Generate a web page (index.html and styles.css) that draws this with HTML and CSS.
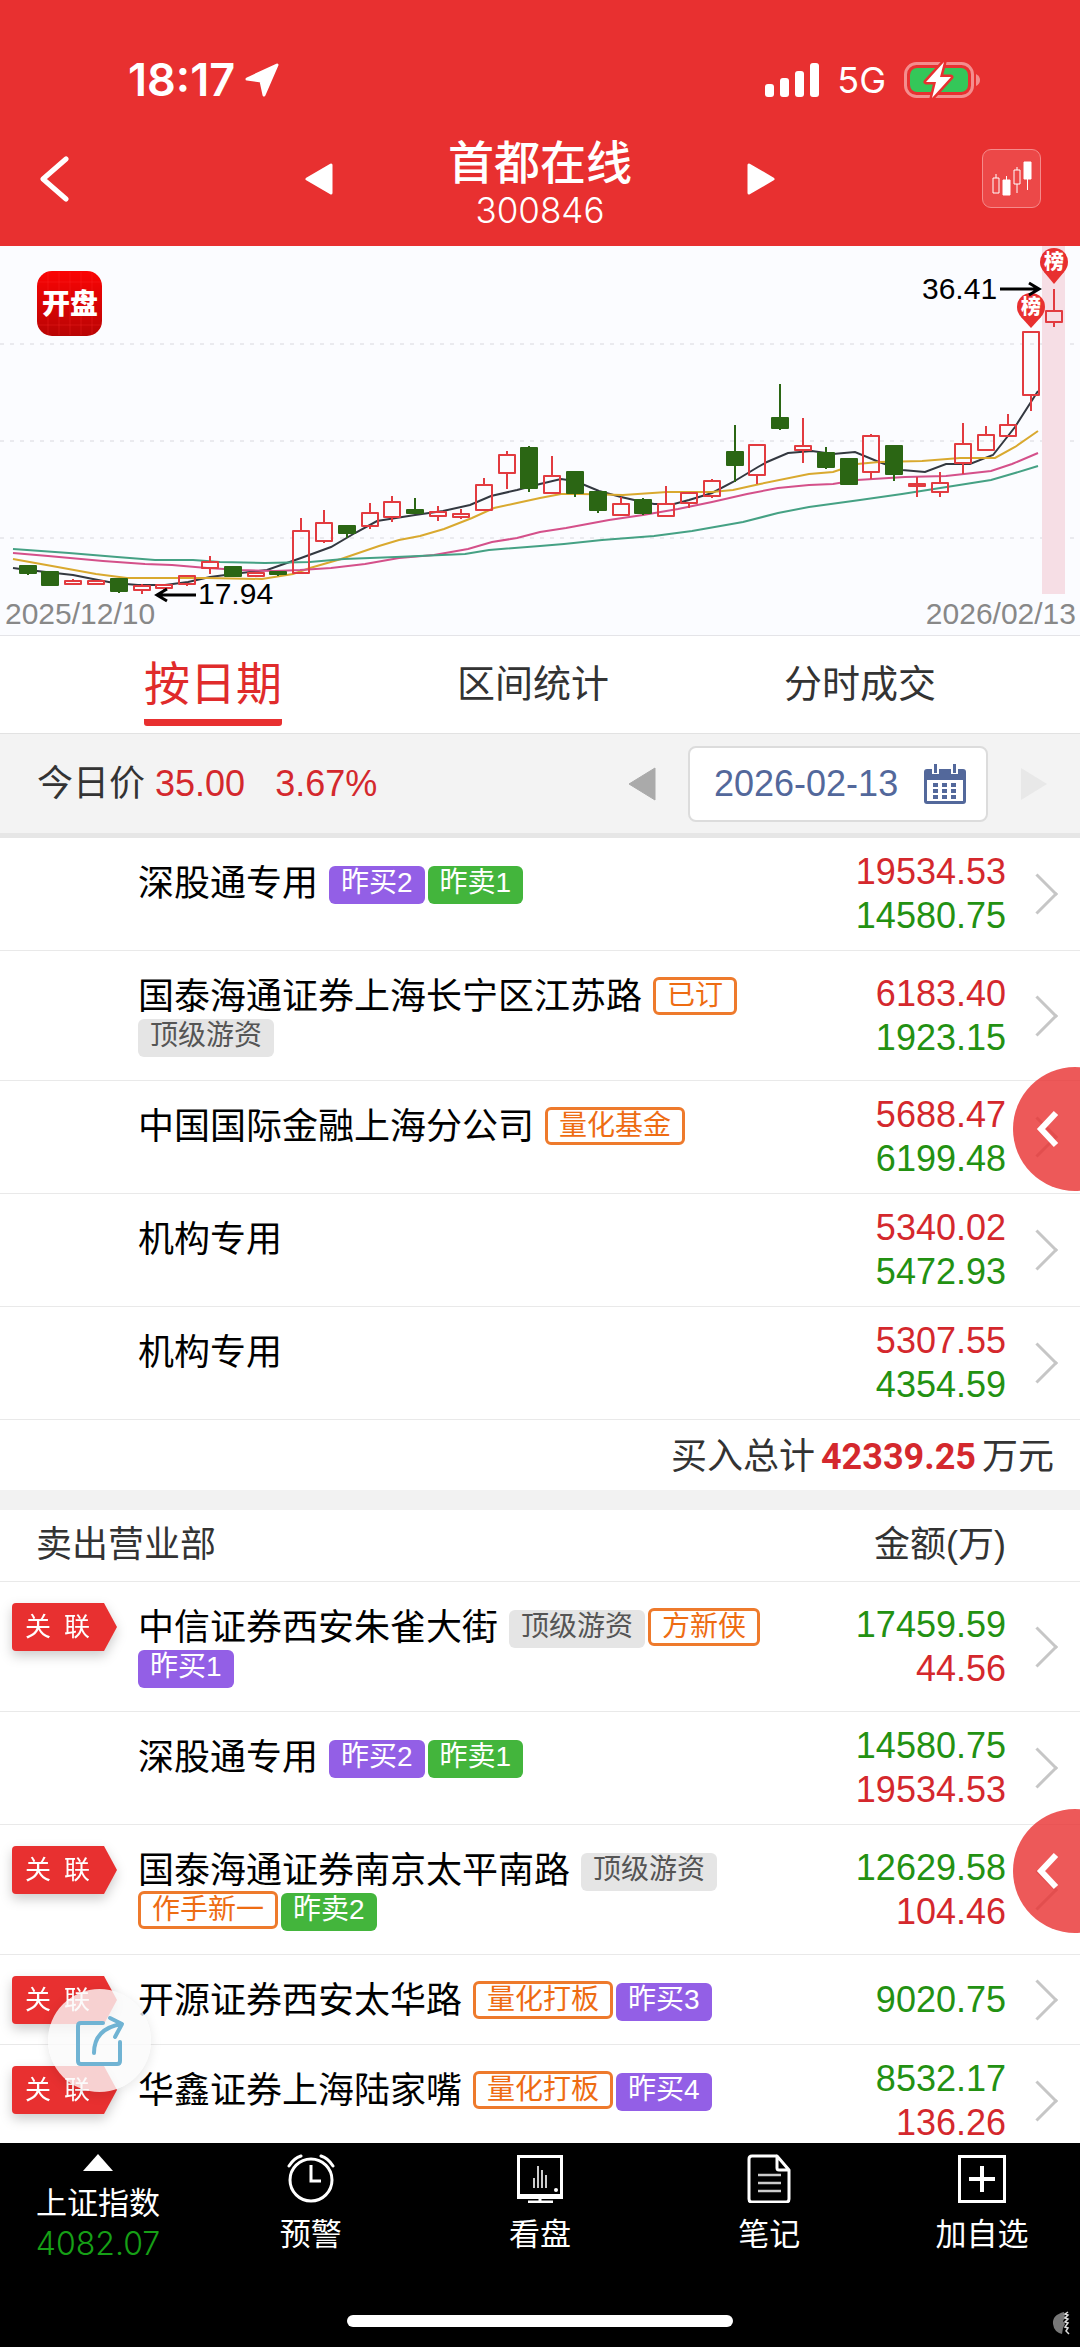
FILE: index.html
```html
<!DOCTYPE html>
<html lang="zh-CN">
<head>
<meta charset="utf-8">
<meta name="viewport" content="width=device-width, initial-scale=1">
<title>首都在线 300846</title>
<link rel="stylesheet" href="styles.css">
</head>
<body>
<header class="top">
  <div class="status">
    <div class="status-side">
      <span class="clock">18:17</span>
      <svg width="34" height="34" viewBox="0 0 34 34"><path d="M32 2 19 32l-3-14L2 16z" fill="#fff" stroke="#fff" stroke-width="3" stroke-linejoin="round"/></svg>
    </div>
    <div class="status-side status-right">
      <svg width="54" height="34" viewBox="0 0 54 34" fill="#fff"><rect y="21" width="9" height="13" rx="3"/><rect x="15" y="15" width="9" height="19" rx="3"/><rect x="30" y="8" width="9" height="26" rx="3"/><rect x="45" width="9" height="34" rx="3"/></svg>
      <span class="net">5G</span>
      <svg width="76" height="38" viewBox="0 0 76 38"><rect x="1.5" y="2.500" width="67" height="33" rx="11" fill="none" stroke="#f48d8d" stroke-width="3"/><path d="M72 13q4 2 4 6t-4 6z" fill="#f48d8d"/><rect x="6" y="7" width="58" height="24" rx="7" fill="#34c759"/><path d="M40 1 22 21h10l-4 16 19-21H36z" fill="#fff" stroke="#e83030" stroke-width="5" stroke-linejoin="round"/><path d="M40 1 22 21h10l-4 16 19-21H36z" fill="#fff"/></svg>
    </div>
  </div>
  <div class="titlebar">
    <button class="icon-btn" aria-label="返回"><svg width="30" height="46" viewBox="0 0 30 46"><path d="M27 3 4 23l23 20" fill="none" stroke="#fff" stroke-width="5" stroke-linecap="round" stroke-linejoin="round"/></svg></button>
    <div class="stock">
      <button class="icon-btn" aria-label="上一只"><svg width="28" height="32" viewBox="0 0 28 32"><path d="M26 2v28L2 16z" fill="#fff" stroke="#fff" stroke-width="3" stroke-linejoin="round"/></svg></button>
      <div class="stock-name"><h1>首都在线</h1><p>300846</p></div>
      <button class="icon-btn" aria-label="下一只"><svg width="28" height="32" viewBox="0 0 28 32"><path d="M2 2v28l24-14z" fill="#fff" stroke="#fff" stroke-width="3" stroke-linejoin="round"/></svg></button>
    </div>
    <button class="kline-btn" aria-label="K线"><svg width="40" height="36" viewBox="0 0 40 36" fill="none" stroke="#fff"><path d="M1 17h6v15H1zM4 13v4" /><path d="M11 19h7v15h-7z" fill="#fff"/><path d="M14.500 15v4"/><path d="M22 9h6v14h-6zM25 6v3m0 14v9"/><path d="M32 1h7v17h-7z" fill="#fff"/><path d="M35.500 18v11"/></svg></button>
  </div>
</header>

<main class="content">
  <svg class="chart" viewBox="0 0 1080 389" role="img" aria-label="日K线">
    <defs>
      <linearGradient id="logo" x2="0" y2="1"><stop offset="0" stop-color="#fb0404"/><stop offset="1" stop-color="#b80404"/></linearGradient>
    </defs>
    <path class="grid" d="M0 98H1080M0 195H1080M0 292H1080"/>
    <rect x="1042" width="23" height="348" fill="#f6dee5"/>
    <rect x="37" y="25" width="65" height="65" rx="15" fill="url(#logo)"/>
    <path d="M48 26v63M59 26v63M70 26v63M81 26v63M92 26v63M38 36h63M38 79h63" stroke="#f33" stroke-opacity=".3"/>
    <text class="logo-text" x="70" y="68">开盘</text>
    <g class="averages">
      <polyline stroke="#333840" points="13,322 28,324 73,329 93,333 114,337 138,339 165,339 188,336 210,331 241,327 267,324 301,312 331,301 355,287 377,275 415,269 443,265 470,259 491,250 517,244 540,238 561,233 575,235 599,245 621,251 643,256 654,258 674,258 689,254 712,247 733,236 758,221 767,216 788,207 812,205 833,208 855,206 879,216 902,224 925,226 946,218 970,218 993,209 1015,181 1038,145"/>
      <polyline stroke="#d9a92f" points="13,313 52,320 96,328 127,332 165,332 207,332 262,333 293,328 310,322 341,313 379,300 399,294 420,290 444,283 472,272 494,262 517,257 540,252 561,248 581,248 623,249 667,246 712,246 733,244 760,238 809,228 833,226 857,218 879,216 922,215 960,212 995,212 1015,201 1038,185"/>
      <polyline stroke="#d4508a" points="13,307 48,310 103,315 145,318 172,319 207,322 241,324 275,325 300,324 331,322 365,318 399,312 434,309 468,303 492,296 517,292 540,286 566,282 609,274 643,269 678,263 712,256 747,248 778,242 809,239 833,238 857,234 905,231 946,230 991,225 1012,218 1038,207"/>
      <polyline stroke="#45a184" points="13,303 69,307 117,311 155,314 193,314 220,316 265,317 310,316 344,313 396,311 465,308 489,304 540,300 564,298 602,294 654,290 692,285 743,276 778,267 809,261 860,254 902,248 953,240 991,234 1015,227 1038,220"/>
    </g>
    <g id="candles"></g>
    <g fill="#e83030"><path d="M1044 26h20l-10 12z"/><circle cx="1054" cy="16" r="14"/><path d="M1021 71h20l-10 11z"/><circle cx="1031" cy="61" r="14"/></g>
    <text class="pin" x="1054" y="23">榜</text>
    <text class="pin" x="1031" y="68">榜</text>
    <path class="arrow" d="M1000 43h38m-9-6 10 6-10 6M196 349h-38m9-6-10 6 10 6"/>
    <text class="mark" x="922" y="53">36.41</text>
    <text class="mark" x="198" y="358">17.94</text>
    <text class="day" x="5" y="378">2025/12/10</text>
    <text class="day day-end" x="1076" y="378">2026/02/13</text>
  </svg>

  <nav class="tabs">
    <a class="tab active" href="#date">按日期</a>
    <a class="tab" href="#range">区间统计</a>
    <a class="tab" href="#tick">分时成交</a>
  </nav>

  <div class="pricebar">
    <p class="price">今日价 <span class="up">35.00</span> <span class="up change">3.67%</span></p>
    <div class="picker">
      <button class="icon-btn" aria-label="前一天"><svg width="28" height="34" viewBox="0 0 28 34"><path d="M27 1v32L1 17z" fill="#aaa" stroke="#aaa" stroke-linejoin="round"/></svg></button>
      <label class="date">
        <input type="text" value="2026-02-13" aria-label="日期" readonly>
        <svg width="42" height="40" viewBox="0 0 42 40"><path d="M3 5h36q3 0 3 3v29q0 3-3 3H3q-3 0-3-3V8q0-3 3-3z" fill="#53689b"/><path d="M3 16h36v21H3z" fill="#fff"/><path d="M8 0h7v10H8zM27 0h7v10h-7z" fill="#fff"/><path d="M10 0h3v9h-3zM29 0h3v9h-3zM9 19h5v4H9zm9 0h5v4h-5zm9 0h5v4h-5zM9 25h5v4H9zm9 0h5v4h-5zm9 0h5v4h-5zM9 31h5v4H9zm9 0h5v4h-5zm9 0h5v4h-5z" fill="#53689b"/></svg>
      </label>
      <button class="icon-btn" aria-label="后一天" disabled><svg width="28" height="34" viewBox="0 0 28 34"><path d="M1 1v32l26-16z" fill="#e8e8e8"/></svg></button>
    </div>
  </div>

  <section class="group">
    <ul class="seats">
      <li class="seat"><div class="who"><span class="name">深股通专用</span><span class="tag buy">昨买2</span><span class="tag sell">昨卖1</span></div><div class="sums"><span class="up">19534.53</span><span class="down">14580.75</span></div></li>
      <li class="seat"><div class="who"><span class="name">国泰海通证券上海长宁区江苏路</span><span class="tag line">已订</span><span class="tag grey">顶级游资</span></div><div class="sums"><span class="up">6183.40</span><span class="down">1923.15</span></div></li>
      <li class="seat"><div class="who"><span class="name">中国国际金融上海分公司</span><span class="tag line">量化基金</span></div><div class="sums"><span class="up">5688.47</span><span class="down">6199.48</span></div></li>
      <li class="seat"><div class="who"><span class="name">机构专用</span></div><div class="sums"><span class="up">5340.02</span><span class="down">5472.93</span></div></li>
      <li class="seat"><div class="who"><span class="name">机构专用</span></div><div class="sums"><span class="up">5307.55</span><span class="down">4354.59</span></div></li>
    </ul>
    <p class="total">买入总计<strong>42339.25</strong>万元</p>
    <button class="drawer drawer-buy" aria-label="展开"><svg width="24" height="38" viewBox="0 0 24 38"><path d="M20 3 5 19l15 16" fill="none" stroke="#fff" stroke-width="6"/></svg></button>
  </section>

  <section class="group group-sell">
    <div class="group-head"><h2>卖出营业部</h2><span>金额(万)</span></div>
    <ul class="seats">
      <li class="seat"><span class="linked">关&ensp;联</span><div class="who"><span class="name">中信证券西安朱雀大街</span><span class="tag grey">顶级游资</span><span class="tag line">方新侠</span><span class="tag buy">昨买1</span></div><div class="sums"><span class="down">17459.59</span><span class="up">44.56</span></div></li>
      <li class="seat"><div class="who"><span class="name">深股通专用</span><span class="tag buy">昨买2</span><span class="tag sell">昨卖1</span></div><div class="sums"><span class="down">14580.75</span><span class="up">19534.53</span></div></li>
      <li class="seat"><span class="linked">关&ensp;联</span><div class="who"><span class="name">国泰海通证券南京太平南路</span><span class="tag grey">顶级游资</span><span class="tag line">作手新一</span><span class="tag sell">昨卖2</span></div><div class="sums"><span class="down">12629.58</span><span class="up">104.46</span></div></li>
      <li class="seat"><span class="linked">关&ensp;联</span><div class="who"><span class="name">开源证券西安太华路</span><span class="tag line">量化打板</span><span class="tag buy">昨买3</span></div><div class="sums"><span class="down">9020.75</span></div></li>
      <li class="seat"><span class="linked">关&ensp;联</span><div class="who"><span class="name">华鑫证券上海陆家嘴</span><span class="tag line">量化打板</span><span class="tag buy">昨买4</span></div><div class="sums"><span class="down">8532.17</span><span class="up">136.26</span></div></li>
    </ul>
    <button class="drawer drawer-sell" aria-label="展开"><svg width="24" height="38" viewBox="0 0 24 38"><path d="M20 3 5 19l15 16" fill="none" stroke="#fff" stroke-width="6"/></svg></button>
  </section>
</main>

<button class="share" aria-label="分享"><svg width="50" height="52" viewBox="0 0 50 52" fill="none" stroke="#70b3d3" stroke-width="4" stroke-linecap="round" stroke-linejoin="round"><path d="M28 8H6q-3 0-3 3v35q0 3 3 3h36q3 0 3-3V27"/><path d="M19 38Q19 14 46 9M35 3l12 6-7 13"/></svg></button>

<footer class="bottom">
  <nav class="menu">
    <a class="menu-item" href="#index"><svg width="32" height="19" viewBox="0 0 32 19"><path d="M16 1 31 18H1z" fill="#fff"/></svg><span>上证指数</span><span class="index">4082.07</span></a>
    <a class="menu-item" href="#alert"><svg width="48" height="50" viewBox="0 0 48 50" fill="none" stroke="#fff" stroke-width="3" stroke-linecap="round"><circle cx="24" cy="27" r="21"/><path d="M24 12v16h10" stroke-linecap="butt"/><path d="M2 13Q7 5 14 3M46 13Q41 5 34 3"/></svg><span>预警</span></a>
    <a class="menu-item" href="#watch"><svg width="48" height="50" viewBox="0 0 48 50" fill="none" stroke="#fff" stroke-width="3"><path d="M2.500 3.500h43v41h-43z"/><path d="M1 43h46" stroke-width="4"/><path d="M24 45v4M12 49h25"/><path d="M18 25v10M22 13v22M26 17v18M30 22v13" stroke-width="2" stroke="#ccc"/><circle cx="40" cy="37" r="2" fill="#fff" stroke="none"/></svg><span>看盘</span></a>
    <a class="menu-item" href="#notes"><svg width="48" height="50" viewBox="0 0 48 50" fill="none" stroke="#fff" stroke-width="3" stroke-linejoin="round"><path d="M32 3H7q-3 0-3 3v40q0 3 3 3h34q3 0 3-3V17L32 3v12q0 2 2 2h10"/><path d="M13 22h23M13 30h23M13 38h23" stroke="#ccc" stroke-width="2.500"/></svg><span>笔记</span></a>
    <a class="menu-item" href="#add"><svg width="48" height="50" viewBox="0 0 48 50" fill="none" stroke="#fff"><path d="M1.500 3.500h45v45h-45z" stroke-width="3"/><path d="M24 13v26M11 26h26" stroke-width="4"/></svg><span>加自选</span></a>
  </nav>
  <div class="home"></div>
  <svg class="smudge" width="18" height="24" viewBox="0 0 18 24"><path d="M12 1Q0 4 1 13q1 8 9 10l1-6 2-4-2-3 2-3z" fill="#777"/><path d="M16 1l-3 2 3 1-3 3 3 1-3 3 3 1-3 4 3 1-2 3 3 3" fill="none" stroke="#ddd" stroke-width="1.500"/></svg>
</footer>
<script src="chart.js"></script>
</body>
</html>
```
FILE: styles.css
```css
* {
  box-sizing: border-box;
}

body {
  margin: 0;
  height: 100vh;
  display: flex;
  flex-direction: column;
  overflow: hidden;
  background: #fff;
  color: #000;
  font-family: "Liberation Sans", "Noto Sans CJK SC", sans-serif;
  font-size: 36px;
  line-height: 40px;
}

h1, h2, p, ul {
  margin: 0;
  padding: 0;
  font-weight: 400;
}

ul {
  list-style: none;
}

a {
  color: inherit;
  text-decoration: none;
}

svg {
  display: block;
}

button {
  padding: 0;
  border: 0;
  background: none;
  font: inherit;
}

.up {
  color: #d4282d;
}

.down {
  color: #239112;
}

/* header */
.top {
  flex: none;
  padding-bottom: 17px;
  background: #e83030;
  color: #fff;
}

.status {
  display: flex;
  justify-content: space-between;
  padding: 56px 100px 24px 128px;
  line-height: 48px;
  font-family: Inter, sans-serif;
}

.status-side {
  display: flex;
  align-items: center;
  gap: 10px;
}

.status-right {
  gap: 18px;
}

.clock {
  font-size: 45px;
  font-weight: 600;
}

.net {
  font-size: 36px;
}

.titlebar {
  display: grid;
  grid-template-columns: 1fr 470px 1fr;
  align-items: center;
  height: 101px;
  padding: 0 39px;
}

.stock {
  display: flex;
  justify-content: space-between;
  align-items: center;
}

.stock-name {
  padding-top: 7px;
  text-align: center;
}

.stock-name h1 {
  font-size: 46px;
  font-weight: 500;
  line-height: 56px;
}

.stock-name p {
  font-family: Inter, sans-serif;
  font-size: 35px;
  font-weight: 300;
  line-height: 38px;
}

.icon-btn {
  justify-self: start;
}

.kline-btn {
  justify-self: end;
  display: grid;
  place-items: center;
  width: 59px;
  height: 59px;
  border: 1px solid #f58a8a;
  border-radius: 9px;
  background: #ec4848;
}

/* main column */
.content {
  flex: 1;
  min-height: 0;
  overflow-x: hidden;
  overflow-y: auto;
  scrollbar-width: none;
}

.chart {
  width: 100%;
  border-bottom: 1px solid #e4e4e8;
  background: #fbfcff;
}

.grid {
  stroke: #d8d8de;
  stroke-dasharray: 4 6;
}

.averages {
  fill: none;
  stroke-width: 2;
}

.logo-text,
.pin {
  fill: #fff;
  font-weight: 900;
  text-anchor: middle;
}

.logo-text {
  font-size: 28px;
}

.pin {
  font-size: 20px;
}

.arrow {
  fill: none;
  stroke: #000;
  stroke-width: 3;
}

.mark,
.day {
  font-size: 30px;
}

.day {
  fill: #888;
}

.day-end {
  text-anchor: end;
}

.tabs {
  display: flex;
  justify-content: space-between;
  padding: 0 144px 7px;
  border-bottom: 1px solid #e2e2e2;
  color: #333;
  font-size: 38px;
  line-height: 96px;
}

.tab {
  height: 90px;
}

.tab.active {
  border-bottom: 7px solid #e83030;
  border-radius: 3px;
  color: #e02b2b;
  font-size: 46px;
}

.pricebar {
  display: flex;
  justify-content: space-between;
  align-items: center;
  padding: 12px 32px 11px 37px;
  border-bottom: 5px solid #e6e6e6;
  background: #f3f3f3;
  color: #333;
}

.change {
  margin-left: 20px;
}

.picker {
  display: flex;
  align-items: center;
  gap: 32px;
}

.date {
  display: flex;
  justify-content: space-between;
  align-items: center;
  width: 300px;
  height: 76px;
  padding: 0 20px 0 24px;
  border: 2px solid #dcdcdc;
  border-radius: 8px;
  background: #fff;
}

.date input {
  width: 190px;
  padding: 0;
  border: 0;
  outline: 0;
  background: none;
  color: #53689b;
  font: inherit;
}

/* broker seats */
.group {
  position: relative;
}

.seat {
  position: relative;
  display: flex;
  align-items: center;
  padding-right: 74px;
  border-bottom: 1px solid #e9e9e9;
}

.seat::after {
  content: "";
  position: absolute;
  right: 28px;
  top: 50%;
  width: 26px;
  height: 26px;
  border: solid #c6c6c6;
  border-width: 3px 3px 0 0;
  transform: translateY(-50%) rotate(45deg);
}

.who {
  flex: 1;
  align-self: flex-start;
  display: flex;
  flex-wrap: wrap;
  align-items: flex-start;
  column-gap: 3px;
  padding: 26px 0 23px 138px;
}

.linked + .who {
  padding-left: 21px;
}

.name {
  margin-right: 8px;
}

.tag {
  margin-top: 2px;
  padding: 0 12px 4px;
  border-radius: 6px;
  color: #fff;
  font-size: 28px;
  line-height: 34px;
}

.buy {
  background: #935fe6;
}

.sell {
  background: #43b53c;
}

.grey {
  background: #e5e5e5;
  color: #555;
}

.line {
  margin-top: 0;
  padding: 0 11px;
  border: 3px solid #ee7a2c;
  color: #ee6c12;
  line-height: 32px;
}

.sums {
  display: flex;
  flex-direction: column;
  width: 160px;
  padding: 12px 0;
  line-height: 44px;
  text-align: right;
}

.linked {
  align-self: flex-start;
  position: relative;
  width: 92px;
  margin: 21px 13px 0 12px;
  padding-left: 13px;
  border-radius: 4px 0 0 4px;
  background: #e83030;
  color: #fff;
  font-size: 26px;
  line-height: 48px;
  white-space: nowrap;
  filter: drop-shadow(0 5px 6px rgba(0, 0, 0, 0.2));
}

.linked::after {
  content: "";
  position: absolute;
  left: 100%;
  top: 0;
  border: solid transparent;
  border-width: 24px 0 24px 13px;
  border-left-color: #e83030;
}

.total {
  padding: 17px 26px 13px;
  color: #333;
  text-align: right;
}

.total strong {
  margin: 0 6px;
  color: #d4282d;
  font-family: Roboto, sans-serif;
}

.group-sell {
  border-top: 20px solid #f2f2f2;
}

.group-head {
  display: flex;
  justify-content: space-between;
  padding: 15px 74px 16px 36px;
  border-bottom: 1px solid #e9e9e9;
  color: #333;
}

.group-head h2 {
  font-size: 36px;
}

.drawer {
  position: absolute;
  right: -57px;
  width: 124px;
  height: 124px;
  padding-left: 23px;
  border-radius: 50%;
  background: rgba(232, 48, 48, 0.8);
}

.drawer-buy {
  top: 229px;
}

.drawer-sell {
  top: 299px;
}

.share {
  position: fixed;
  left: 48px;
  bottom: 255px;
  display: grid;
  place-items: center;
  width: 103px;
  height: 103px;
  border-radius: 50%;
  background: rgba(250, 250, 250, 0.8);
  box-shadow: 0 3px 12px rgba(0, 0, 0, 0.1);
}

/* bottom bar */
.bottom {
  position: relative;
  flex: none;
  padding-bottom: 20px;
  background: #000;
  color: #fff;
}

.menu {
  display: grid;
  grid-template-columns: 196px 1fr 1fr 1fr 196px;
  height: 172px;
  padding-top: 10px;
  font-size: 31px;
}

.menu-item {
  display: flex;
  flex-direction: column;
  align-items: center;
  gap: 12px;
}

.menu-item .index {
  margin-top: -12px;
  color: #16a016;
  font-family: Inter, sans-serif;
  font-size: 32px;
  font-weight: 300;
}

.home {
  width: 386px;
  height: 12px;
  margin: 0 auto;
  border-radius: 6px;
  background: #fff;
}

.smudge {
  position: absolute;
  right: 10px;
  bottom: 12px;
}
```
FILE: chart.js
```js
// [rising, high, body top, body bottom, low] for each trading day
const days = [
  [0,320,320,327,329],[0,326,326,339,339],[1,333,335,338,339],[1,334,335,338,339],[0,333,333,345,347],
  [1,338,340,344,348],[1,338,339,342,344],[1,329,330,338,340],[1,310,316,322,328],[0,320,321,330,330],
  [1,326,327,330,331],[0,325,326,328,330],[1,272,285,327,328],[1,264,277,295,297],[0,280,280,287,292],
  [1,257,267,280,283],[1,250,256,271,276],[0,252,264,267,268],[1,260,266,270,275],[1,263,268,271,273],
  [1,232,239,264,265],[1,205,209,227,243],[0,200,202,242,246],[1,210,230,247,248],[0,226,226,247,251],
  [0,246,246,264,267],[1,251,258,269,270],[0,252,254,267,269],[1,240,258,270,271],[1,246,247,257,262],
  [1,233,235,250,252],[0,179,206,219,236],[1,198,199,229,238],[0,138,172,182,184],[1,172,200,204,217],
  [0,201,207,221,223],[0,212,213,238,238],[1,188,190,226,233],[0,200,200,228,235],[1,231,238,240,251],
  [1,226,237,246,251],[1,177,198,217,228],[1,180,189,204,204],[1,168,179,190,190],[1,86,86,149,165],
  [1,43,65,76,81]
];
const first = 27.5;
const step = 22.81;

document.getElementById("candles").innerHTML = days.map(([rising, high, top, bottom, low], i) => {
  const x = Math.round(first + i * step);
  const color = rising ? "#e23b40" : "#2b6614";
  const body = `<rect x="${x - 8}" y="${top}" width="16" height="${bottom - top}" fill="${rising ? "none" : color}"/>`;
  return `<g stroke="${color}" stroke-width="2" stroke-linejoin="round"><path d="M${x} ${high}V${top}M${x} ${bottom}V${low}"/>${body}</g>`;
}).join("");
```
